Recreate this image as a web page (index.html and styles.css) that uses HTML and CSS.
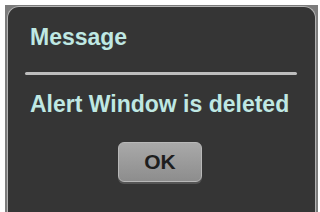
FILE: index.html
```html
<!DOCTYPE html>
<html>
<head>
<meta charset="utf-8">
<link rel="stylesheet" href="styles.css">
</head>
<body>
<div class="frame">
  <div class="panel">
    <div class="title">Message</div>
    <div class="rule"></div>
    <div class="msg">Alert Window is deleted</div>
    <div class="btn">OK</div>
  </div>
</div>
</body>
</html>
```
FILE: styles.css
```css
html, body {
  margin: 0;
  padding: 0;
  background: #ffffff;
}
.frame {
  margin: 5px 0 0 5px;
  width: 309px;
  height: 206px;
  padding: 1px 2px 0 2px;
  background: #7c7c7c;
}
.panel {
  height: 205px;
  background: #353535;
  border: 1px solid #b4b4b4;
  border-bottom: none;
  border-radius: 12px 12px 0 0;
  overflow: hidden;
  font-family: "Liberation Sans", Arial, sans-serif;
}
.title, .msg {
  font-size: 23px;
  font-weight: bold;
  line-height: 26px;
  color: #bfe8e3;
  padding-left: 22px;
}
.title {
  margin-top: 17px;
}
.rule {
  margin: 22px 0 0 17px;
  width: 272px;
  height: 3px;
  border-radius: 2px;
  background: #bdbdbd;
}
.msg {
  margin-top: 16px;
}
.btn {
  margin: 25px 0 0 110px;
  width: 82px;
  height: 38px;
  border: 1px solid #b8b8b8;
  border-radius: 6px;
  background: linear-gradient(#a9a9a9, #8d8d8d);
  box-shadow: 0 2px 0 #555555;
  color: #1e1e1e;
  font-size: 21px;
  font-weight: bold;
  line-height: 38px;
  text-align: center;
}
```
